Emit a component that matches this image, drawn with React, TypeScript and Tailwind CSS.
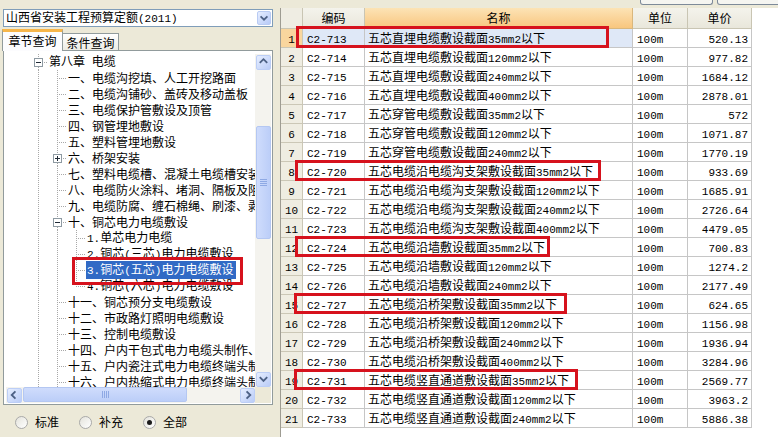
import React from "react";

type G = "_" | "I" | "T" | "L" | "minus" | "plus";

const DOT = "#A8A8A8";

// half-width runs get a narrow mono face, like the old bitmap font
function Mixed({ text }: { text: string }) {
  const parts = text.match(/[\x20-\x7e]+|[^\x20-\x7e]+/g) ?? [];
  return (
    <>
      {parts.map((p, i) =>
        /^[\x20-\x7e]/.test(p) ? (
          <span key={i} className="font-['Liberation_Mono',monospace] text-[11px]">
            {p}
          </span>
        ) : (
          <span key={i}>{p}</span>
        )
      )}
    </>
  );
}

// tree connector glyph, one indentation cell
function Guide({ g }: { g: G }) {
  const box = g === "minus" || g === "plus";
  return (
    <svg width="19" height="16" className="shrink-0" shapeRendering="crispEdges">
      {(g === "I" || g === "T") && (
        <line x1="9.5" y1="0" x2="9.5" y2="16" stroke={DOT} strokeDasharray="1 1" />
      )}
      {g === "L" && <line x1="9.5" y1="0" x2="9.5" y2="9" stroke={DOT} strokeDasharray="1 1" />}
      {(g === "T" || g === "L") && (
        <line x1="11" y1="8.5" x2="19" y2="8.5" stroke={DOT} strokeDasharray="1 1" />
      )}
      {box && (
        <>
          <line x1="9.5" y1="0" x2="9.5" y2="4" stroke={DOT} strokeDasharray="1 1" />
          <line x1="9.5" y1="13" x2="9.5" y2="16" stroke={DOT} strokeDasharray="1 1" />
          <line x1="15" y1="8.5" x2="19" y2="8.5" stroke={DOT} strokeDasharray="1 1" />
          <rect x="5.5" y="4.5" width="8" height="8" fill="#fff" stroke="#8E9AA2" />
          <line x1="7" y1="8.5" x2="12" y2="8.5" stroke="#1F2A36" />
          {g === "plus" && <line x1="9.5" y1="6" x2="9.5" y2="11" stroke="#1F2A36" />}
        </>
      )}
    </svg>
  );
}

const tree: { g: G[]; t: string; sel?: boolean }[] = [
  { g: ["minus"], t: "第八章 电缆" },
  { g: ["I", "T"], t: "一、电缆沟挖填、人工开挖路面" },
  { g: ["I", "T"], t: "二、电缆沟铺砂、盖砖及移动盖板" },
  { g: ["I", "T"], t: "三、电缆保护管敷设及顶管" },
  { g: ["I", "T"], t: "四、钢管埋地敷设" },
  { g: ["I", "T"], t: "五、塑料管埋地敷设" },
  { g: ["I", "plus"], t: "六、桥架安装" },
  { g: ["I", "T"], t: "七、塑料电缆槽、混凝土电缆槽安装" },
  { g: ["I", "T"], t: "八、电缆防火涂料、堵洞、隔板及阻燃" },
  { g: ["I", "T"], t: "九、电缆防腐、缠石棉绳、刷漆、剥皮" },
  { g: ["I", "minus"], t: "十、铜芯电力电缆敷设" },
  { g: ["I", "I", "T"], t: "1.单芯电力电缆" },
  { g: ["I", "I", "T"], t: "2.铜芯(三芯)电力电缆敷设" },
  { g: ["I", "I", "T"], t: "3.铜芯(五芯)电力电缆敷设", sel: true },
  { g: ["I", "I", "L"], t: "4.铜芯(六芯)电力电缆敷设" },
  { g: ["I", "T"], t: "十一、铜芯预分支电缆敷设" },
  { g: ["I", "T"], t: "十二、市政路灯照明电缆敷设" },
  { g: ["I", "T"], t: "十三、控制电缆敷设" },
  { g: ["I", "T"], t: "十四、户内干包式电力电缆头制作、安装" },
  { g: ["I", "T"], t: "十五、户内瓷注式电力电缆终端头制作" },
  { g: ["I", "T"], t: "十六、户内热缩式电力电缆终端头制作" },
];

const rows: [string, string, string, { x: number; w: number }?][] = [
  ["C2-713", "五芯直埋电缆敷设截面35mm2以下", "520.13", { x: 296, w: 313 }],
  ["C2-714", "五芯直埋电缆敷设截面120mm2以下", "977.82"],
  ["C2-715", "五芯直埋电缆敷设截面240mm2以下", "1684.12"],
  ["C2-716", "五芯直埋电缆敷设截面400mm2以下", "2878.01"],
  ["C2-717", "五芯穿管电缆敷设截面35mm2以下", "572"],
  ["C2-718", "五芯穿管电缆敷设截面120mm2以下", "1071.87"],
  ["C2-719", "五芯穿管电缆敷设截面240mm2以下", "1770.19"],
  ["C2-720", "五芯电缆沿电缆沟支架敷设截面35mm2以下", "933.69", { x: 295, w: 306 }],
  ["C2-721", "五芯电缆沿电缆沟支架敷设截面120mm2以下", "1685.91"],
  ["C2-722", "五芯电缆沿电缆沟支架敷设截面240mm2以下", "2726.64"],
  ["C2-723", "五芯电缆沿电缆沟支架敷设截面400mm2以下", "4479.05"],
  ["C2-724", "五芯电缆沿墙敷设截面35mm2以下", "700.83", { x: 295, w: 255 }],
  ["C2-725", "五芯电缆沿墙敷设截面120mm2以下", "1274.2"],
  ["C2-726", "五芯电缆沿墙敷设截面240mm2以下", "2177.49"],
  ["C2-727", "五芯电缆沿桥架敷设截面35mm2以下", "624.65", { x: 294, w: 273 }],
  ["C2-728", "五芯电缆沿桥架敷设截面120mm2以下", "1156.98"],
  ["C2-729", "五芯电缆沿桥架敷设截面240mm2以下", "1936.94"],
  ["C2-730", "五芯电缆沿桥架敷设截面400mm2以下", "3284.96"],
  ["C2-731", "五芯电缆竖直通道敷设截面35mm2以下", "2569.77", { x: 294, w: 284 }],
  ["C2-732", "五芯电缆竖直通道敷设截面120mm2以下", "3963.2"],
  ["C2-733", "五芯电缆竖直通道敷设截面240mm2以下", "5886.38"],
];

function Arrow({ dir }: { dir: "up" | "down" | "left" | "right" }) {
  const d = {
    up: "M3 8 L7 4 L11 8",
    down: "M3 5 L7 9 L11 5",
    left: "M8 3 L4 7 L8 11",
    right: "M6 3 L10 7 L6 11",
  }[dir];
  return (
    <svg width="14" height="14" viewBox="0 0 14 14">
      <path d={d} fill="none" stroke="#4D6185" strokeWidth="2" />
    </svg>
  );
}

function SBtn({ dir }: { dir: "up" | "down" | "left" | "right" }) {
  return (
    <div className="flex h-[16px] w-[16px] shrink-0 items-center justify-center">
      <div className="flex h-[15px] w-[15px] items-center justify-center rounded-[2px] border border-[#BCCEF6] bg-gradient-to-br from-[#E6EEFF] to-[#BACCF7]">
        <Arrow dir={dir} />
      </div>
    </div>
  );
}

function Grip({ vertical }: { vertical: boolean }) {
  return (
    <div className={`flex ${vertical ? "flex-col" : "flex-row"} gap-[1px]`}>
      {[0, 1, 2, 3].map((k) => (
        <div
          key={k}
          className={vertical ? "h-[1px] w-[7px] bg-[#8EA9E4]" : "h-[7px] w-[1px] bg-[#8EA9E4]"}
        />
      ))}
    </div>
  );
}

function Radio({ label, checked }: { label: string; checked?: boolean }) {
  return (
    <div className="flex items-center gap-[7px]">
      <div className="flex h-[13px] w-[13px] items-center justify-center rounded-full border border-[#A9A9A9] bg-gradient-to-br from-[#E4E3DC] to-white">
        {checked && <div className="h-[5px] w-[5px] rounded-full bg-[#1B1B1B]" />}
      </div>
      <span className="leading-none">{label}</span>
    </div>
  );
}

export default function App() {
  return (
    <div className="relative flex h-[437px] w-[778px] overflow-hidden bg-[#ECE9D8] font-['Noto_Sans_CJK_SC',sans-serif] text-[12px] text-black">
      {/* left: chapter tree */}
      <div className="flex w-[276px] shrink-0 flex-col pt-[9px]">
        <div className="ml-[3px] flex h-[18px] w-[270px] items-center border border-[#7F9DB9] bg-white">
          <span className="flex-1 pl-[2px] leading-none">
            <Mixed text="山西省安装工程预算定额(2011)" />
          </span>
          <div className="mr-[1px] flex h-[14px] w-[14px] items-center justify-center rounded-[2px] border border-[#B9CBF3] bg-gradient-to-br from-[#E6EEFF] to-[#B7CAF7]">
            <Arrow dir="down" />
          </div>
        </div>

        <div className="mt-[2px] flex h-[21px] items-end pl-[2px]">
          <div className="relative z-10 -mb-px flex h-[22px] w-[61px] items-center justify-center border-x border-t-[3px] border-x-[#919B9C] border-t-[#F7B64A] bg-[#FCFCFE] pb-[1px]">
            章节查询
          </div>
          <div className="flex h-[17px] w-[56px] items-center justify-center border-t border-r border-[#919B9C] bg-gradient-to-b from-white to-[#ECEBE4] pt-[1px]">
            条件查询
          </div>
        </div>

        <div className="ml-[3px] flex h-[355px] w-[270px] flex-col border border-[#919B9C] bg-white pt-[3px] pr-[1px] pb-[1px] pl-[2px]">
          <div className="flex min-h-0 flex-1">
            <div className="min-w-0 flex-1 overflow-hidden pl-[23px]">
              {tree.map((n, i) => (
                <div key={i} className="relative flex h-[16px] items-center whitespace-nowrap">
                  {n.g.map((g, k) => (
                    <Guide key={k} g={g} />
                  ))}
                  <span
                    className={`whitespace-pre px-[1px] leading-[16px] ${n.sel ? "bg-[#316AC5] pr-[3px] text-white" : ""}`}
                  >
                    <Mixed text={n.t} />
                  </span>
                  {n.sel && (
                    <div className="pointer-events-none absolute top-[-5px] left-[43px] z-10 h-[28px] w-[171px] border-[3px] border-[#D6121D]" />
                  )}
                </div>
              ))}
            </div>
            {/* vertical scrollbar */}
            <div className="flex w-[16px] shrink-0 flex-col bg-[#F4F3EE]">
              <SBtn dir="up" />
              <div className="flex-1 pt-[56px]">
                <div className="mx-auto flex h-[113px] w-[15px] items-center justify-center rounded-[2px] border border-[#B4C7F2] bg-gradient-to-r from-[#CFDCFC] to-[#BCCEF8]">
                  <Grip vertical />
                </div>
              </div>
              <SBtn dir="down" />
            </div>
          </div>
          {/* horizontal scrollbar */}
          <div className="flex h-[16px] shrink-0">
            <div className="flex flex-1 bg-[#F4F3EE]">
              <SBtn dir="left" />
              <div className="flex-1 pl-[1px]">
                <div className="flex h-[15px] w-[164px] items-center justify-center rounded-[2px] border border-[#B4C7F2] bg-gradient-to-b from-[#CFDCFC] to-[#BCCEF8]">
                  <Grip vertical={false} />
                </div>
              </div>
              <SBtn dir="right" />
            </div>
            <div className="w-[16px] bg-[#ECE9D8]" />
          </div>
        </div>

        <div className="flex flex-1 items-center gap-[20px] pt-[2px] pl-[15px]">
          <Radio label="标准" />
          <Radio label="补充" />
          <Radio label="全部" checked />
        </div>
      </div>

      {/* right: quota list */}
      <div className="flex min-w-0 flex-1 flex-col">
        <div className="flex h-[8px] shrink-0 items-start gap-[4px] pl-[364px]">
          <div className="h-[5px] w-[73px] shrink-0 rounded-b-[3px] border-x border-b border-[#7D8A99] bg-[#F5F5F1]" />
          <div className="h-[5px] w-[70px] shrink-0 rounded-b-[3px] border-x border-b border-[#7D8A99] bg-[#F5F5F1]" />
        </div>
        <div className="ml-[4px] flex flex-1 flex-col border-l border-[#9E9C92] bg-white">
          <div className="flex h-[21px] shrink-0">
            <div className="w-[22px] border-r border-b border-[#C9C5B3] bg-[#EFEDE3]" />
            <div className="flex w-[62px] items-center justify-center border-r border-b border-[#C9C5B3] bg-gradient-to-b from-[#F4F3EC] to-[#E9E7DB]">
              编码
            </div>
            <div className="flex w-[268px] items-center justify-center border-r border-b border-[#D9B77D] bg-gradient-to-b from-[#FCE3B5] to-[#F8C67E]">
              名称
            </div>
            <div className="flex w-[55px] items-center justify-center border-r border-b border-[#C9C5B3] bg-gradient-to-b from-[#F4F3EC] to-[#E9E7DB]">
              单位
            </div>
            <div className="flex w-[64px] items-center justify-center border-r border-b border-[#C9C5B3] bg-gradient-to-b from-[#F4F3EC] to-[#E9E7DB]">
              单价
            </div>
          </div>
          {rows.map(([code, name, price, mark], i) => {
            const cur = i === 0;
            return (
              <div key={code} className="relative flex h-[19px] shrink-0 leading-[18px]">
                <div
                  className={`w-[22px] border-r border-b border-[#CBC7B6] text-center ${cur ? "bg-[#F9D69E]" : "bg-[#EFEDE2]"}`}
                >
                  <Mixed text={String(i + 1)} />
                </div>
                <div className={`w-[62px] border-r border-b border-[#C6C6C6] pl-[4px] ${cur ? "bg-[#DFE8F7]" : ""}`}>
                  <Mixed text={code} />
                </div>
                <div
                  className={`w-[268px] overflow-hidden border-r border-b border-[#C6C6C6] pl-[3px] whitespace-nowrap ${cur ? "bg-[#DFE8F7]" : ""}`}
                >
                  <Mixed text={name} />
                </div>
                <div className="w-[55px] border-r border-b border-[#C6C6C6] pl-[4px]">
                  <Mixed text="100m" />
                </div>
                <div className="w-[64px] border-r border-b border-[#C6C6C6] pr-[3px] text-right">
                  <Mixed text={price} />
                </div>
                {mark && (
                  <div
                    className={`pointer-events-none absolute z-10 border-[3px] border-[#D6121D] ${cur ? "top-[-3px] h-[22px]" : "top-[-2px] h-[21px]"}`}
                    style={{ left: mark.x - 281, width: mark.w }}
                  />
                )}
              </div>
            );
          })}
        </div>
      </div>
    </div>
  );
}
